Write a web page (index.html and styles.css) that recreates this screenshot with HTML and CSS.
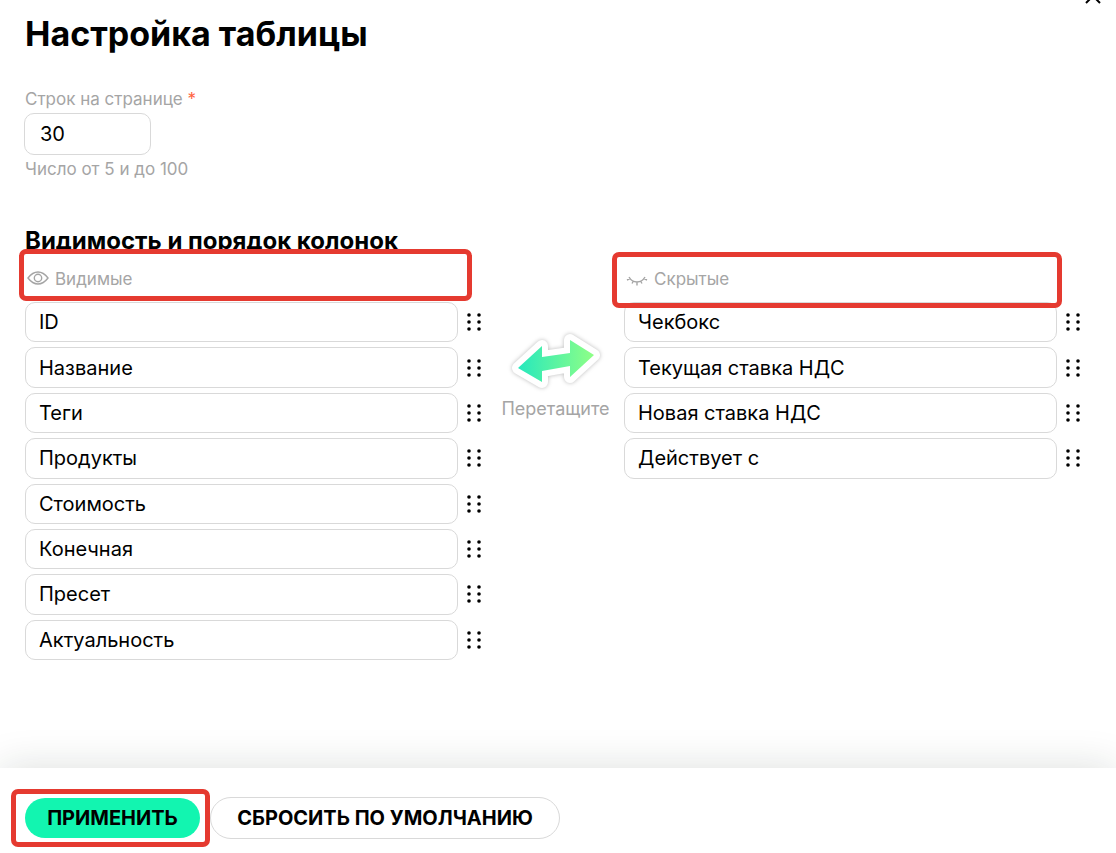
FILE: index.html
```html
<!DOCTYPE html>
<html lang="ru">
<head>
    <meta charset="UTF-8">
    <meta name="viewport" content="width=device-width, initial-scale=1">
    <title>Настройка таблицы</title>
    <link rel="stylesheet" href="styles.css">
</head>
<body>
    <svg class="sprite" aria-hidden="true">
        <symbol id="dots" viewBox="0 0 20 20">
            <circle cx="2" cy="3" r="1.800"/><circle cx="12" cy="3" r="1.800"/>
            <circle cx="2" cy="10" r="1.800"/><circle cx="12" cy="10" r="1.800"/>
            <circle cx="2" cy="17" r="1.800"/><circle cx="12" cy="17" r="1.800"/>
        </symbol>
    </svg>

    <form class="settings">
        <button type="button" class="close" aria-label="Закрыть">
            <svg width="16" height="16" viewBox="0 0 16 16"><path d="M1 1l14 14M15 1L1 15"/></svg>
        </button>

        <main class="content">
            <h1>Настройка таблицы</h1>

            <div class="form-group">
                <label for="rows">Строк на странице <span class="required">*</span></label>
                <input type="text" id="rows" value="30" inputmode="numeric">
                <p class="hint">Число от 5 и до 100</p>
            </div>

            <h2>Видимость и порядок колонок</h2>
            <div class="columns">
                <section>
                    <div class="list-title marked">
                        <svg class="icon" viewBox="0 0 24 16"><path d="M3 7C6 3 9.500 1 13 1S20 3 23 7c-3 4-6.500 6-10 6S6 11 3 7z"/><circle cx="13" cy="7" r="3.700"/></svg>
                        Видимые
                    </div>
                    <ul class="list">
                        <li><span class="item">ID</span><svg class="handle"><use href="#dots"/></svg></li>
                        <li><span class="item">Название</span><svg class="handle"><use href="#dots"/></svg></li>
                        <li><span class="item">Теги</span><svg class="handle"><use href="#dots"/></svg></li>
                        <li><span class="item">Продукты</span><svg class="handle"><use href="#dots"/></svg></li>
                        <li><span class="item">Стоимость</span><svg class="handle"><use href="#dots"/></svg></li>
                        <li><span class="item">Конечная</span><svg class="handle"><use href="#dots"/></svg></li>
                        <li><span class="item">Пресет</span><svg class="handle"><use href="#dots"/></svg></li>
                        <li><span class="item">Актуальность</span><svg class="handle"><use href="#dots"/></svg></li>
                    </ul>
                </section>

                <div class="drag">
                    <svg class="arrow" viewBox="0 0 100 64">
                        <defs>
                            <linearGradient id="green" x1="0" y1="0" x2="1" y2="0">
                                <stop offset="0" stop-color="#26e8bd"/>
                                <stop offset="1" stop-color="#8fff86"/>
                            </linearGradient>
                        </defs>
                        <path class="arrow-edge" d="M12 38L36 16v11l28-4V10l24 15-24 22V36l-28 5v11z"/>
                        <path fill="url(#green)" d="M12 38L36 16v11l28-4V10l24 15-24 22V36l-28 5v11z"/>
                    </svg>
                    <span>Перетащите</span>
                </div>

                <section>
                    <div class="list-title marked marked-hidden">
                        <svg class="icon" viewBox="0 0 24 16"><path d="M5 6c2 3.500 5 5 8 5s6-1.500 8-5M6 7.500L3 9M9.500 10L8 12.500M13 11v3.500M16.500 10l1.500 2.500M20 7.500L23 9"/></svg>
                        Скрытые
                    </div>
                    <ul class="list">
                        <li><span class="item">Чекбокс</span><svg class="handle"><use href="#dots"/></svg></li>
                        <li><span class="item">Текущая ставка НДС</span><svg class="handle"><use href="#dots"/></svg></li>
                        <li><span class="item">Новая ставка НДС</span><svg class="handle"><use href="#dots"/></svg></li>
                        <li><span class="item">Действует с</span><svg class="handle"><use href="#dots"/></svg></li>
                    </ul>
                </section>
            </div>
        </main>

        <footer>
            <div class="marked marked-apply"><button type="submit" class="btn btn-primary">Применить</button></div>
            <button type="reset" class="btn">Сбросить по умолчанию</button>
        </footer>
    </form>
</body>
</html>
```
FILE: styles.css
```css
* { box-sizing: border-box; }
body { margin: 0; font-family: Inter, "Open Sans", sans-serif; font-size: 20px; line-height: 24px; color: #000; background: #fff; }
h1, h2, p, ul { margin: 0; padding: 0; }
.sprite { position: absolute; width: 0; height: 0; }
.settings { position: relative; display: flex; flex-direction: column; min-height: 100vh; overflow: hidden; }
.content { flex: 1; padding: 14px 30px 40px 25px; }
.close { position: absolute; top: -12px; right: 15px; width: 16px; height: 16px; padding: 0; border: none; background: none; cursor: pointer; }
.close svg { display: block; fill: none; stroke: #000; stroke-width: 2; }

h1 { font-size: 34px; line-height: 40px; font-weight: 700; }
h2 { font-size: 24px; line-height: 30px; font-weight: 700; }

.form-group { margin: 33px 0 45px; color: #a5a5a5; font-size: 17px; }
.form-group label { display: block; margin-bottom: 2px; }
.required { color: #ff6341; }
.form-group input {
    display: block; width: 127px; height: 42px; margin-left: -1px; padding: 0 15px;
    border: 1px solid #d9d9d9; border-radius: 10px; font: inherit; font-size: 20px; color: #000; background: #fff;
}
.hint { margin-top: 2px; }

.columns { display: grid; grid-template-columns: 1fr 137px 1fr; }
.list-title { display: flex; align-items: center; gap: 6px; height: 46px; color: #a5a5a5; font-size: 17px; }
.icon { width: 24px; height: 16px; fill: none; stroke: #a5a5a5; stroke-width: 1.4; }
.list { display: grid; grid-template-rows: repeat(8, 1fr); gap: 5px; min-height: 358px; list-style: none; }
.list li { display: flex; align-items: center; gap: 9px; }
.item { display: flex; flex: 1; align-items: center; height: 100%; padding: 0 13px; border: 1px solid #d9d9d9; border-radius: 10px; }
.handle { width: 20px; height: 20px; cursor: move; }

.drag { display: flex; flex-direction: column; align-items: center; padding-top: 74px; color: #a5a5a5; font-size: 18px; }
.arrow { width: 100px; height: 64px; margin-bottom: 3px; }
.arrow-edge { fill: #fff; stroke: #fff; stroke-width: 12; stroke-linejoin: round; filter: drop-shadow(0 0 2px #bbb); }

/* red frames around the parts to look at */
.marked { position: relative; }
.marked::after { content: ""; position: absolute; top: -7px; right: 15px; bottom: 1px; left: -6px; border: 5px solid #e53a30; border-radius: 7px; pointer-events: none; }
.marked-hidden::after { top: -4px; right: 24px; bottom: -6px; left: -12px; }
.marked-apply::after { top: -9px; right: -10px; bottom: -9px; left: -14px; }

footer { display: flex; align-items: center; gap: 10px; padding: 29px 25px 14px; background: #fff; box-shadow: 0 0 40px rgba(20, 40, 30, 0.15); }
.btn { min-width: 350px; height: 42px; padding: 0 20px; border: 1px solid #d9d9d9; border-radius: 21px; background: #fff; color: #000; font: inherit; font-weight: 700; text-transform: uppercase; cursor: pointer; }
.btn-primary { display: block; min-width: 175px; height: 40px; border: none; background: #12f5b0; }
```
